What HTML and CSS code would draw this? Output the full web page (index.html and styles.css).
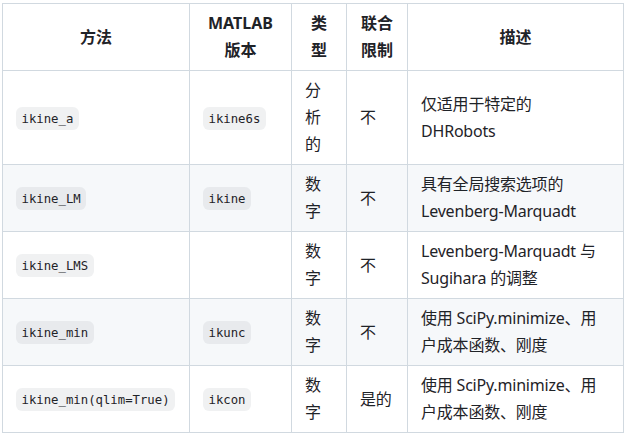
FILE: index.html
```html
<!DOCTYPE html>
<html lang="zh">
<head>
<meta charset="utf-8">
<link rel="stylesheet" href="styles.css">
</head>
<body>
<div class="wrap">
<table class="md-table">
  <colgroup>
    <col class="c-method">
    <col class="c-matlab">
    <col class="c-type">
    <col class="c-limit">
    <col class="c-desc">
  </colgroup>
  <thead>
    <tr>
      <th>方法</th>
      <th>MATLAB 版本</th>
      <th>类型</th>
      <th>联合限制</th>
      <th>描述</th>
    </tr>
  </thead>
  <tbody>
    <tr>
      <td><code>ikine_a</code></td>
      <td><code>ikine6s</code></td>
      <td>分析的</td>
      <td>不</td>
      <td>仅适用于特定的 DHRobots</td>
    </tr>
    <tr>
      <td><code>ikine_LM</code></td>
      <td><code>ikine</code></td>
      <td>数字</td>
      <td>不</td>
      <td>具有全局搜索选项的 Levenberg-Marquadt</td>
    </tr>
    <tr>
      <td><code>ikine_LMS</code></td>
      <td></td>
      <td>数字</td>
      <td>不</td>
      <td>Levenberg-Marquadt 与 Sugihara 的调整</td>
    </tr>
    <tr>
      <td><code>ikine_min</code></td>
      <td><code>ikunc</code></td>
      <td>数字</td>
      <td>不</td>
      <td>使用 SciPy.minimize、用户成本函数、刚度</td>
    </tr>
    <tr>
      <td><code>ikine_min(qlim=True)</code></td>
      <td><code>ikcon</code></td>
      <td>数字</td>
      <td>是的</td>
      <td>使用 SciPy.minimize、用户成本函数、刚度</td>
    </tr>
  </tbody>
</table>
</div>
</body>
</html>
```
FILE: styles.css
```css
html, body {
  margin: 0;
  padding: 0;
  background: #ffffff;
}
body {
  font-family: "Noto Sans", "Noto Sans CJK SC", sans-serif;
  font-size: 16px;
  line-height: 27px;
  color: #1f2328;
}
.wrap {
  padding: 3px 2px;
}
.md-table {
  border-collapse: collapse;
  table-layout: fixed;
  width: 621px;
}
.c-method { width: 187px; }
.c-matlab { width: 102px; }
.c-type { width: 55px; }
.c-limit { width: 61px; }
.c-desc { width: 216px; }
.md-table th,
.md-table td {
  border: 1px solid #d1d9e0;
  padding: 6px 13px;
  vertical-align: middle;
  word-break: break-word;
}
.md-table th {
  font-weight: 700;
  text-align: center;
}
.md-table td {
  text-align: left;
  letter-spacing: -0.2px;
}
.md-table tbody tr:nth-child(even) {
  background: #f6f8fa;
}
.md-table code {
  font-family: "DejaVu Sans Mono", "Liberation Mono", monospace;
  font-size: 12.3px;
  letter-spacing: 0;
  background: rgba(129, 139, 152, 0.12);
  border-radius: 6px;
  padding: 4.5px 5.5px;
  white-space: nowrap;
}
```
